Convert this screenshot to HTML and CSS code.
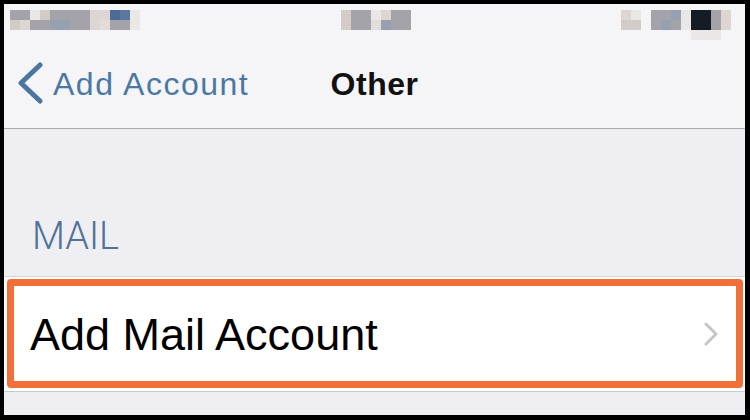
FILE: index.html
```html
<!DOCTYPE html>
<html>
<head>
<meta charset="utf-8">
<link rel="stylesheet" href="styles.css">
</head>
<body>
<div class="screen">
  <div class="status">
    <div class="mosaic m-left">
      <i class="g"></i><i class="g"></i><i class="w"></i><i class="b"></i><i class="g"></i><i class="g"></i><i class="g"></i><i class="g"></i><i class="b2"></i><i class="b2"></i><i class="u"></i><i class="u2"></i><i class="w"></i>
      <i class="b"></i><i class="b2"></i><i class="g"></i><i class="g"></i><i class="gu"></i><i class="gu"></i><i class="g"></i><i class="g"></i><i class="b2"></i><i class="w2"></i><i class="g"></i><i class="g"></i><i class="w"></i>
    </div>
    <div class="mosaic m-center">
      <i class="b"></i><i class="g"></i><i class="g"></i><i class="w"></i><i class="b2"></i><i class="g"></i><i class="g"></i>
      <i class="b"></i><i class="g"></i><i class="g"></i><i class="w2"></i><i class="gu"></i><i class="g"></i><i class="g"></i>
    </div>
    <div class="mosaic m-right">
      <i class="b2"></i><i class="w"></i><i class="n"></i><i class="g"></i><i class="g"></i><i class="gu"></i><i class="w"></i><i class="k"></i><i class="k"></i><i class="g"></i><i class="b2"></i><i class="n"></i>
      <i class="b"></i><i class="b"></i><i class="n"></i><i class="g"></i><i class="gu"></i><i class="g"></i><i class="w"></i><i class="k"></i><i class="k"></i><i class="g"></i><i class="b2"></i><i class="n"></i>
      <i class="n"></i><i class="n"></i><i class="n"></i><i class="n"></i><i class="n"></i><i class="n"></i><i class="n"></i><i class="w"></i><i class="w"></i><i class="w"></i><i class="n"></i><i class="n"></i>
    </div>
  </div>

  <div class="nav">
    <div class="back">
      <svg class="back-chev" width="26" height="42" viewBox="0 0 26 42">
        <polyline points="23,3 4,21 23,39" fill="none" stroke="#4a76a0" stroke-width="5" stroke-linecap="round" stroke-linejoin="round"/>
      </svg>
      <span class="back-label">Add Account</span>
    </div>
    <div class="title">Other</div>
    <div class="spacer"></div>
  </div>

  <div class="content">
    <div class="section-header">MAIL</div>
    <div class="cell-group">
      <div class="highlight">
        <span class="cell-label">Add Mail Account</span>
        <svg class="disclosure" width="15" height="24" viewBox="0 0 15 24">
          <polyline points="2,2 12,12 2,22" fill="none" stroke="#c9c4c2" stroke-width="3" stroke-linecap="round" stroke-linejoin="round"/>
        </svg>
      </div>
    </div>
  </div>
</div>
</body>
</html>
```

FILE: styles.css
```css
* { box-sizing: border-box; }

html, body {
  margin: 0;
  padding: 0;
  background: #000;
}

.screen {
  width: 750px;
  height: 420px;
  border-style: solid;
  border-color: #000;
  border-width: 4px 5px 5px 4px;
  background: #efeff3;
  display: flex;
  flex-direction: column;
  overflow: hidden;
  font-family: "Liberation Sans", Arial, sans-serif;
}

/* status bar (pixelated) */
.status {
  height: 44px;
  background: #f5f5f7;
  display: flex;
  padding-top: 6px;
}

.mosaic {
  display: grid;
  grid-auto-rows: 10px;
  grid-template-columns: repeat(var(--cols), 10px);
}

.mosaic i { display: block; }

.m-left { --cols: 13; margin-left: 6px; }
.m-center { --cols: 7; margin-left: 201px; }
.m-right { --cols: 12; margin-left: 210px; }

.g { background: #a3a3a9; }
.gu { background: #97a0b0; }
.b { background: #d3cbc7; }
.b2 { background: #ddd6d3; }
.w { background: #eae7e7; }
.w2 { background: #e2dcda; }
.u { background: #4c6c98; }
.u2 { background: #5b77a0; }
.k { background: #161c26; }
.n { background: transparent; }

/* navigation bar */
.nav {
  height: 81px;
  background: #f5f5f7;
  border-bottom: 1px solid #a9a9ad;
  display: grid;
  grid-template-columns: 1fr auto 1fr;
  align-items: start;
}

.back {
  display: flex;
  align-items: flex-start;
  padding-left: 13px;
  padding-top: 14px;
}

.back-chev {
  display: block;
  flex: none;
}

.back-label {
  margin-left: 10px;
  margin-top: 6px;
  font-size: 32px;
  line-height: 32px;
  letter-spacing: 1.5px;
  color: #4b78a3;
}

.title {
  padding-top: 20px;
  font-size: 32px;
  line-height: 32px;
  font-weight: bold;
  color: #111;
  letter-spacing: 0.5px;
}

/* content */
.content {
  flex: 1;
  display: flex;
  flex-direction: column;
}

.section-header {
  height: 147px;
  padding-top: 88px;
  padding-left: 28px;
  font-family: Roboto, "Liberation Sans", sans-serif;
  font-weight: 300;
  font-size: 38px;
  line-height: 38px;
  color: #4e7299;
}

.cell-group {
  background: #fff;
  border-top: 1px solid #dbd3cf;
  border-bottom: 1px solid #c9c9cd;
  padding: 2px 2px 3px 3px;
}

.highlight {
  height: 109px;
  border: 7px solid #f36f3a;
  border-radius: 4px;
  display: flex;
  align-items: center;
  justify-content: space-between;
  padding: 0 17px 0 16px;
}

.cell-label {
  font-size: 45px;
  line-height: 45px;
  color: #000;
  padding-top: 2px;
}

.disclosure {
  display: block;
  flex: none;
  margin-top: 1px;
}
```
